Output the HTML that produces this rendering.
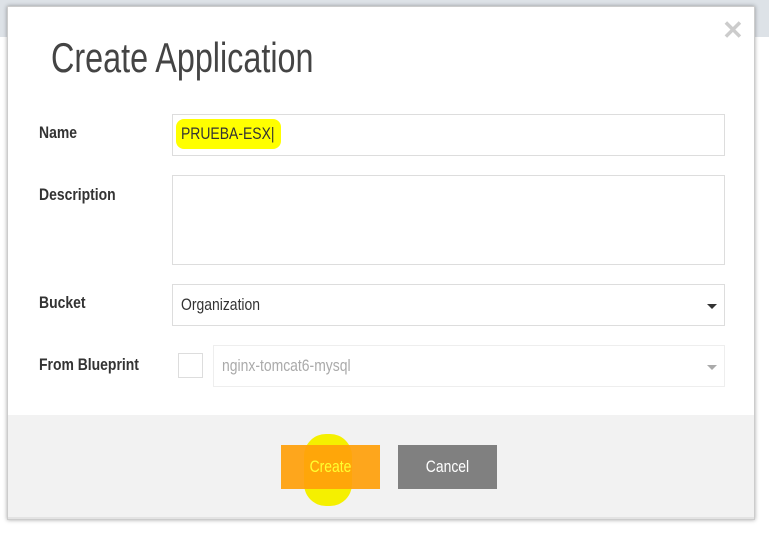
<!DOCTYPE html>
<html><head><style>
body{margin:0;width:769px;height:538px;background:#fff;position:relative;overflow:hidden;font-family:"Liberation Sans",sans-serif}
.top{position:absolute;left:0;top:0;width:769px;height:37px;background:#dde2e7}
.modal{position:absolute;left:7px;top:6px;width:748px;height:514px;background:#fff;box-shadow:0 0 4px rgba(0,0,0,.35);border:1px solid #ccc;box-sizing:border-box}
.n{display:inline-block;transform:scaleX(.82);transform-origin:left center;white-space:nowrap}
.abs{position:absolute}
.lbl{position:absolute;left:31px;font-size:17px;font-weight:bold;color:#333}
.inp{position:absolute;border:1px solid #ddd;box-sizing:border-box;background:#fff}
.txt{position:absolute;left:8px;font-size:17px;color:#333}
.foot{position:absolute;left:0;top:408px;width:746px;height:104px;background:#f2f2f2;border-bottom:2px solid #e3e3e3;box-sizing:border-box}
.btn{position:absolute;top:30px;width:99px;height:44px;font-size:17px;text-align:center;line-height:44px}
.caret{position:absolute;width:0;height:0;border-left:5px solid transparent;border-right:5px solid transparent;border-top:5px solid #333}
</style></head><body>
<div class="top"></div>
<div class="modal">
 <div class="abs" style="left:714px;top:8px;font-size:26px;font-weight:bold;color:#ccc">✕</div>
 <div class="abs" style="left:43px;top:27px;font-size:42px;color:#444"><span class="n" style="transform:scaleX(.77)">Create Application</span></div>
 <div class="lbl" style="top:116px"><span class="n">Name</span></div>
 <div class="inp" style="left:164px;top:107px;width:553px;height:42px">
  <div class="abs" style="left:3px;top:4px;width:105px;height:30px;background:#ffff00;border-radius:8px"></div>
  <div class="txt" style="top:9px"><span class="n">PRUEBA-ESX|</span></div>
 </div>
 <div class="lbl" style="top:178px"><span class="n">Description</span></div>
 <div class="inp" style="left:164px;top:168px;width:553px;height:90px"></div>
 <div class="lbl" style="top:286px"><span class="n">Bucket</span></div>
 <div class="inp" style="left:164px;top:277px;width:553px;height:42px">
  <div class="txt" style="top:10px"><span class="n">Organization</span></div>
  <div class="caret" style="left:534px;top:19px"></div>
 </div>
 <div class="lbl" style="top:348px"><span class="n">From Blueprint</span></div>
 <div class="inp" style="left:170px;top:346px;width:25px;height:25px"></div>
 <div class="inp" style="left:205px;top:338px;width:512px;height:42px;border-color:#eee">
  <div class="txt" style="top:10px;color:#aaa"><span class="n">nginx-tomcat6-mysql</span></div>
  <div class="caret" style="left:493px;top:19px;border-top-color:#aaa"></div>
 </div>
 <div class="foot">
  <div class="abs" style="left:296px;top:19px;width:48px;height:72px;background:#f5f000;border-radius:22px"></div>
  <div class="btn" style="left:273px;background:rgba(255,160,10,.92);color:#ffff30"><span class="n" style="transform-origin:center">Create</span></div>
  <div class="btn" style="left:390px;background:#808080;color:#fff"><span class="n" style="transform-origin:center">Cancel</span></div>
 </div>
</div>
</body></html>
